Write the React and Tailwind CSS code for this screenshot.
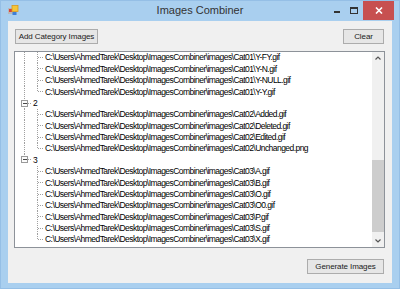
import React from "react";

const ROW_H = 11.375;
const LINE = "#a0a0a0";

const groups = [
  { label: null, files: ["Cat01\\Y-FY.gif", "Cat01\\Y-N.gif", "Cat01\\Y-NULL.gif", "Cat01\\Y-Y.gif"] },
  { label: "2", files: ["Cat02\\Added.gif", "Cat02\\Deleted.gif", "Cat02\\Edited.gif", "Cat02\\Unchanged.png"] },
  {
    label: "3",
    last: true,
    files: ["Cat03\\A.gif", "Cat03\\B.gif", "Cat03\\O.gif", "Cat03\\O0.gif", "Cat03\\P.gif", "Cat03\\S.gif", "Cat03\\X.gif"],
  },
];

const BASE = "C:\\Users\\AhmedTarek\\Desktop\\ImagesCombiner\\images\\";

// connector lines for a file row
const ChildLines = ({ rootLine, lastChild }) => {
  const mid = ROW_H / 2;
  return (
    <svg width="30" height={ROW_H} className="shrink-0" shapeRendering="crispEdges">
      {rootLine && <line x1="9.5" y1="0" x2="9.5" y2={ROW_H} stroke={LINE} strokeDasharray="1 1" />}
      <line x1="22.5" y1="0" x2="22.5" y2={lastChild ? mid : ROW_H} stroke={LINE} strokeDasharray="1 1" />
      <line x1="23" y1={mid} x2="29" y2={mid} stroke={LINE} strokeDasharray="1 1" />
    </svg>
  );
};

// connector + expander box for a node row
const NodeLines = ({ last }) => {
  const mid = ROW_H / 2;
  return (
    <svg width="18" height={ROW_H} className="shrink-0" shapeRendering="crispEdges">
      <line x1="9.5" y1="0" x2="9.5" y2={last ? mid : ROW_H} stroke={LINE} strokeDasharray="1 1" />
      <line x1="13" y1={mid} x2="17" y2={mid} stroke={LINE} strokeDasharray="1 1" />
      <rect x="6.5" y={mid - 3} width="6" height="6" fill="#fbfbfb" stroke="#9a9a9a" />
      <line x1="8" y1={mid} x2="11.5" y2={mid} stroke="#4a4a4a" />
    </svg>
  );
};

const TreeText = ({ children }) => (
  <span className="text-[8.5px] tracking-[-0.55px] leading-none text-black whitespace-nowrap">{children}</span>
);

const Btn = ({ children, className = "" }) => (
  <button
    className={`h-[15px] border border-[#acacac] bg-[#e6e6e6] text-[8px] tracking-[-0.1px] text-[#1a1a1a] leading-none flex items-center justify-center ${className}`}
  >
    {children}
  </button>
);

export default function App() {
  return (
    <div
      className="w-[400px] h-[289px] bg-[#a9cfef] flex flex-col border border-[#95bfe6] overflow-hidden"
      style={{ fontFamily: '"Liberation Sans", Arial, sans-serif' }}
    >
      {/* title bar */}
      <div className="h-[20px] shrink-0 grid grid-cols-[72px_1fr_72px]">
        <div className="pl-[7px] pt-[4px]">
          <svg width="11" height="11" viewBox="0 0 11 11">
            <rect x="0" y="3" width="6" height="6" fill="#b9b9b9" />
            <rect x="1" y="4" width="3" height="3" fill="#d9443c" />
            <rect x="4" y="0.5" width="6" height="6" fill="#f5c63a" stroke="#d99a1e" strokeWidth="0.8" />
            <rect x="4.5" y="7" width="4" height="3" fill="#3f7fd6" />
          </svg>
        </div>
        <div className="text-center text-[11px] text-[#333] pt-[4px] leading-none">Images Combiner</div>
        <div className="flex items-start justify-end pr-[5px]">
          <div className="w-[16px] h-[18px] flex items-center justify-center">
            <div className="w-[6px] h-[2px] bg-[#333] mt-[3px]" />
          </div>
          <div className="w-[18px] h-[18px] flex items-center justify-center">
            <div className="w-[8px] h-[7px] border border-[#333] border-t-2" />
          </div>
          <div className="w-[31px] h-[19px] bg-[#c75050] flex items-center justify-center">
            <svg width="8" height="7" viewBox="0 0 8 7">
              <path d="M1 0.5 L7 6.5 M7 0.5 L1 6.5" stroke="#fff" strokeWidth="1.6" />
            </svg>
          </div>
        </div>
      </div>

      {/* client area */}
      <div className="flex-1 mx-[7px] mb-[5px] bg-[#f0f0f0] flex flex-col pl-[6px] pr-[7px] pt-[8px]">
        <div className="flex justify-between px-[1px]">
          <Btn className="w-[83px] border-[#7aa9dc] bg-[#e5ecf5]">Add Category Images</Btn>
          <Btn className="w-[41px]">Clear</Btn>
        </div>

        <div className="mt-[7px] h-[197px] border border-[#8d9299] bg-white flex">
          <div className="flex-1 overflow-hidden flex flex-col">
            {groups.map((g, gi) => (
              <React.Fragment key={gi}>
                {g.label && (
                  <div className="h-[11.375px] flex items-center">
                    <NodeLines last={g.last} />
                    <TreeText>{g.label}</TreeText>
                  </div>
                )}
                {g.files.map((f, fi) => (
                  <div key={f} className="h-[11.375px] flex items-center">
                    <ChildLines rootLine={!g.last} lastChild={fi === g.files.length - 1} />
                    <TreeText>{BASE + f}</TreeText>
                  </div>
                ))}
              </React.Fragment>
            ))}
          </div>

          {/* scrollbar */}
          <div className="w-[12px] bg-[#f0f0f0] flex flex-col">
            <div className="h-[12px] flex items-center justify-center">
              <svg width="6" height="4" viewBox="0 0 6 4">
                <path d="M0.5 3.5 L3 1 L5.5 3.5" stroke="#555" strokeWidth="1.2" fill="none" />
              </svg>
            </div>
            <div className="h-[96px]" />
            <div className="h-[72px] bg-[#cdcdcd]" />
            <div className="flex-1" />
            <div className="h-[12px] flex items-center justify-center">
              <svg width="6" height="4" viewBox="0 0 6 4">
                <path d="M0.5 0.5 L3 3 L5.5 0.5" stroke="#555" strokeWidth="1.2" fill="none" />
              </svg>
            </div>
          </div>
        </div>

        <div className="mt-[11px] flex justify-end pr-[1px]">
          <Btn className="w-[77px]">Generate Images</Btn>
        </div>
      </div>
    </div>
  );
}
